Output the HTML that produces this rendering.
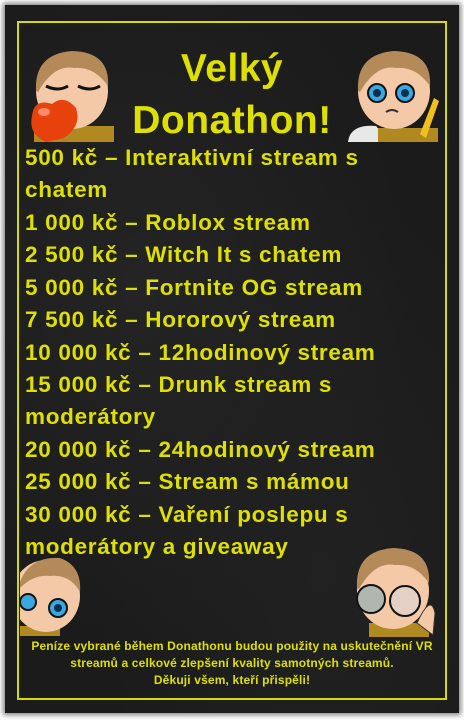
<!DOCTYPE html>
<html><head><meta charset="utf-8"><style>
html,body{margin:0;padding:0;background:#fff;}
body{width:464px;height:720px;position:relative;overflow:hidden;font-family:"Liberation Sans","DejaVu Sans",sans-serif;}
.board{position:absolute;left:5px;top:5px;width:454px;height:708px;background:#1b1b1b;box-shadow:0 0 5px 2px rgba(0,0,0,.5);
background-image:radial-gradient(ellipse at 30% 40%,#242424,transparent 60%),radial-gradient(ellipse at 70% 80%,#212121,transparent 50%);}
.frame{position:absolute;left:17px;top:21px;width:426px;height:675px;border:2px solid #d6dc00;}
.t{position:absolute;color:#dde000;font-weight:bold;white-space:nowrap;}
.title{left:0;width:464px;text-align:center;font-size:39px;letter-spacing:0.5px;}
.li{left:25px;font-size:22.5px;letter-spacing:0.7px;}
.foot{left:0;width:464px;text-align:center;font-size:12px;letter-spacing:0.15px;}
svg{position:absolute;}
</style></head><body>
<div class="board"></div>
<div class="frame"></div>

<div class="t title" style="top:47px">Velký</div>
<div class="t title" style="top:99px">Donathon!</div>

<div class="t li" style="top:145px">500 kč – Interaktivní stream s</div>
<div class="t li" style="top:177px">chatem</div>
<div class="t li" style="top:210px">1 000 kč – Roblox stream</div>
<div class="t li" style="top:242px">2 500 kč – Witch It s chatem</div>
<div class="t li" style="top:275px">5 000 kč – Fortnite OG stream</div>
<div class="t li" style="top:307px">7 500 kč – Hororový stream</div>
<div class="t li" style="top:340px">10 000 kč – 12hodinový stream</div>
<div class="t li" style="top:372px">15 000 kč – Drunk stream s</div>
<div class="t li" style="top:404px">moderátory</div>
<div class="t li" style="top:437px">20 000 kč – 24hodinový stream</div>
<div class="t li" style="top:469px">25 000 kč – Stream s mámou</div>
<div class="t li" style="top:502px">30 000 kč – Vaření poslepu s</div>
<div class="t li" style="top:534px">moderátory a giveaway</div>

<div class="t foot" style="top:639px">Peníze vybrané během Donathonu budou použity na uskutečnění VR</div>
<div class="t foot" style="top:656px">streamů a celkové zlepšení kvality samotných streamů.</div>
<div class="t foot" style="top:673px">Děkuji všem, kteří přispěli!</div>

<svg style="left:24px;top:46px" width="96" height="96" viewBox="0 0 96 96">
<rect x="10" y="80" width="80" height="16" fill="#b08a20"/>
<ellipse cx="48" cy="45" rx="36" ry="38" fill="#f3c9a8"/>
<path d="M12 45 Q10 8 48 5 Q86 6 84 40 Q70 20 50 22 Q30 18 14 46Z" fill="#b48a58"/>
<path d="M22 40 Q34 46 44 40 M54 40 Q66 46 76 40" stroke="#111" stroke-width="3" fill="none"/>
<path d="M8 70 Q10 52 28 58 Q40 48 52 62 Q58 80 40 92 L22 96 Q4 88 8 70Z" fill="#e8420c"/>
<ellipse cx="20" cy="66" rx="6" ry="4" fill="#ff8a6a"/>
</svg>
<svg style="left:348px;top:46px" width="92" height="96" viewBox="0 0 92 96">
<path d="M0 96 Q2 78 28 80 L42 96Z" fill="#e8e8e8"/>
<rect x="30" y="82" width="60" height="14" fill="#b08a20"/>
<ellipse cx="46" cy="45" rx="36" ry="38" fill="#f3c9a8"/>
<path d="M10 45 Q8 8 46 5 Q84 6 82 40 Q68 20 48 22 Q28 18 12 46Z" fill="#b48a58"/>
<circle cx="29" cy="47" r="9" fill="#39a7e0" stroke="#111" stroke-width="2"/>
<circle cx="57" cy="47" r="9" fill="#39a7e0" stroke="#111" stroke-width="2"/>
<circle cx="29" cy="47" r="4" fill="#0a3050"/><circle cx="57" cy="47" r="4" fill="#0a3050"/>
<path d="M38 66 Q44 62 50 66" stroke="#333" stroke-width="2" fill="none"/>
<path d="M72 88 L86 52 L91 55 L78 92Z" fill="#f0c020"/>
</svg>
<svg style="left:20px;top:552px" width="68" height="84" viewBox="0 0 68 84">
<rect x="0" y="74" width="40" height="10" fill="#b08a20"/>
<ellipse cx="26" cy="44" rx="34" ry="36" fill="#f3c9a8"/>
<path d="M0 30 Q10 4 40 6 Q62 14 60 40 Q50 22 30 24 Q14 22 0 36Z" fill="#b48a58"/>
<circle cx="8" cy="50" r="8" fill="#39a7e0" stroke="#111" stroke-width="2"/>
<circle cx="38" cy="56" r="9" fill="#39a7e0" stroke="#111" stroke-width="2"/>
<circle cx="38" cy="56" r="4" fill="#0a3050"/>
</svg>
<svg style="left:345px;top:543px" width="94" height="94" viewBox="0 0 94 94">
<rect x="24" y="80" width="60" height="14" fill="#b08a20"/>
<ellipse cx="48" cy="48" rx="36" ry="38" fill="#f3c9a8"/>
<path d="M12 45 Q10 8 48 5 Q86 6 84 40 Q70 20 50 22 Q30 18 14 46Z" fill="#b48a58"/>
<circle cx="26" cy="56" r="14" fill="#6aa8b8" fill-opacity=".5" stroke="#111" stroke-width="2"/>
<circle cx="60" cy="58" r="15" fill="#cde" fill-opacity=".4" stroke="#111" stroke-width="2"/>
<path d="M72 80 Q86 50 90 70 L88 92Z" fill="#f3c9a8" stroke="#333"/>
</svg>
</body></html>
